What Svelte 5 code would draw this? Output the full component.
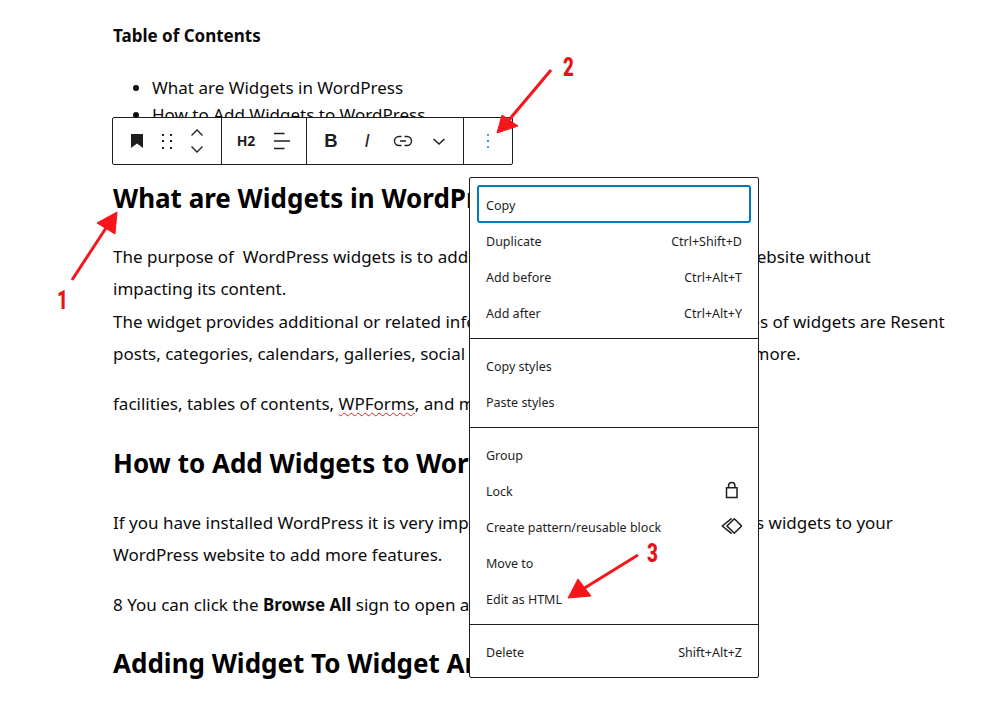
<script>
  const groups = [
    [
      { label: "Copy", focus: true },
      { label: "Duplicate", hint: "Ctrl+Shift+D" },
      { label: "Add before", hint: "Ctrl+Alt+T" },
      { label: "Add after", hint: "Ctrl+Alt+Y" }
    ],
    [{ label: "Copy styles" }, { label: "Paste styles" }],
    [
      { label: "Group" },
      { label: "Lock", icon: "lock" },
      { label: "Create pattern/reusable block", icon: "pattern" },
      { label: "Move to" },
      { label: "Edit as HTML" }
    ],
    [{ label: "Delete", hint: "Shift+Alt+Z" }]
  ];
</script>

<div class="page">
  <article class="post">
    <p class="toc-title"><strong>Table of Contents</strong></p>
    <ul>
      <li>What are Widgets in WordPress</li>
      <li>How to Add Widgets to WordPress</li>
    </ul>

    <h2 class="first">What are Widgets in WordPress</h2>
    <p>
      The purpose of&nbsp; WordPress widgets is to add extra helpful functionality to your website without<br />
      impacting its content.<br />
      The widget provides additional or related information for readers. Some examples of widgets are Resent<br />
      posts, categories, calendars, galleries, social media icons, search box, and many more.
    </p>
    <p>facilities, tables of contents, <span class="typo">WPForms</span>, and more.</p>

    <h2>How to Add Widgets to WordPress</h2>
    <p>
      If you have installed WordPress it is very important to learn how to add all various widgets to your<br />
      WordPress website to add more features.
    </p>
    <p>8 You can click the <strong>Browse All</strong> sign to open all the widgets.</p>

    <h2>Adding Widget To Widget Area</h2>
  </article>

  <div class="toolbar">
    <div class="tool-group first-group">
      <button aria-label="Table of contents">
        <svg width="24" height="24" viewBox="0 0 24 24"><path d="M6 5h12v14l-6-4.400-6 4.400z" fill="#1e1e1e" /></svg>
      </button>
      <button aria-label="Drag">
        <svg width="24" height="24" viewBox="0 0 24 24" fill="#1e1e1e">
          <path d="M7 5h2v2H7zM15 5h2v2h-2zM7 11h2v2H7zM15 11h2v2h-2zM7 18h2v2H7zM15 18h2v2h-2z" />
        </svg>
      </button>
      <div class="movers">
        <svg width="16" height="9" viewBox="0 0 16 9"><path d="M2.500 7.500 8 2l5.500 5.500" fill="none" stroke="#1e1e1e" stroke-width="1.300" /></svg>
        <svg width="16" height="9" viewBox="0 0 16 9"><path d="M2.500 1.500 8 7l5.500-5.500" fill="none" stroke="#1e1e1e" stroke-width="1.300" /></svg>
      </div>
    </div>
    <div class="tool-group wide second-group">
      <button class="h2-btn">H2</button>
      <button aria-label="Align">
        <svg width="24" height="24" viewBox="0 0 24 24" fill="#1e1e1e">
          <path d="M4 3.800h10.500v1.400H4zM4 11.300h16v1.400H4zM4 18.800h10.500v1.400H4z" />
        </svg>
      </button>
    </div>
    <div class="tool-group wide third-group">
      <button class="fmt bold">B</button>
      <button class="fmt italic">I</button>
      <button aria-label="Link">
        <svg width="24" height="24" viewBox="0 0 24 24" fill="none" stroke="#1e1e1e" stroke-width="1.400">
          <path d="M10.500 7.500H8a4.500 4.500 0 0 0 0 9h2.500M13.500 7.500H16a4.500 4.500 0 0 1 0 9h-2.500M9 12h6" />
        </svg>
      </button>
      <button aria-label="More">
        <svg width="24" height="24" viewBox="0 0 24 24"><path d="M6.500 10l5.500 5 5.500-5" fill="none" stroke="#1e1e1e" stroke-width="1.500" /></svg>
      </button>
    </div>
    <div class="tool-group last-group">
      <button aria-label="Options">
        <svg width="24" height="24" viewBox="0 0 24 24" fill="#007cba">
          <path d="M11.200 5h1.600v1.800h-1.600zM11.200 11.100h1.600v1.800h-1.600zM11.200 17.200h1.600V19h-1.600z" />
        </svg>
      </button>
    </div>
  </div>

  <div class="menu">
    {#each groups as group}
      <div class="menu-group">
        {#each group as item}
          <div class="menu-item" class:focus={item.focus}>
            <span>{item.label}</span>
            {#if item.hint}
              <span>{item.hint}</span>
            {:else if item.icon === "lock"}
              <svg width="24" height="24" viewBox="0 0 24 24" fill="none" stroke="#1e1e1e" stroke-width="1.500">
                <path d="M8.500 8.800h10.500v9.700H8.500zM10.600 8.800V6.600a3.150 3.150 0 0 1 6.300 0v2.200" />
              </svg>
            {:else if item.icon === "pattern"}
              <svg width="24" height="24" viewBox="0 0 24 24" fill="none" stroke="#1e1e1e" stroke-width="1.500">
                <path d="M16.300 3.700 23.600 11l-7.300 7.300L9 11zM13.700 3.300 4.300 11l9.400 7.700" />
              </svg>
            {/if}
          </div>
        {/each}
      </div>
    {/each}
  </div>

  <svg class="arrows" width="997" height="714" viewBox="0 0 997 714">
    <g fill="#f7151c" stroke="#f7151c">
      <path d="M72 280 106 228" stroke-width="3" />
      <path d="M117 212 97 223 115 234z" />
      <path d="M551 70 509 120" stroke-width="3" />
      <path d="M497 133 502 115 518 126z" />
      <path d="M638 555 583 589" stroke-width="3" />
      <path d="M568 598 578 579 591 596z" />
    </g>
  </svg>
  <span class="num one">1</span>
  <span class="num two">2</span>
  <span class="num three">3</span>
</div>

<style>
  :global(body) {
    background: #fff;
  }

  .page {
    position: relative;
    width: 997px;
    height: 714px;
    overflow: hidden;
    font-family: "Noto Sans", sans-serif;
    color: #0b0b0b;
  }

  .post {
    padding: 22px 0 0 113px;
    font-size: 17px;
    line-height: 32.4px;
    white-space: nowrap;
  }

  p {
    margin: 0 0 17.5px;
  }

  .toc-title {
    line-height: 27px;
    margin-bottom: 25px;
  }

  ul {
    margin: 0;
    padding-left: 39px;
    line-height: 27px;
    height: 54px;
  }

  h2 {
    font-size: 26px;
    line-height: 36px;
    font-weight: 700;
    color: #000;
    margin: 24px 0 26px;
  }

  h2.first {
    margin-top: 52px;
    margin-bottom: 25px;
  }

  .typo {
    text-decoration: underline wavy #e02020 1px;
    text-underline-offset: 2px;
  }

  .toolbar {
    position: absolute;
    left: 112px;
    top: 117px;
    display: flex;
    height: 46px;
    background: #fff;
    border: 1px solid #1e1e1e;
    border-radius: 2px;
  }

  .tool-group {
    display: flex;
    align-items: center;
    border-right: 1px solid #1e1e1e;
  }

  .first-group {
    padding: 0 9px;
  }

  .wide {
    padding: 0 6px;
  }

  .last-group {
    width: 48px;
    justify-content: center;
    border-right: 0;
  }

  .first-group button,
  .movers {
    width: 30px;
  }

  .wide button {
    width: 36px;
  }

  button {
    display: flex;
    align-items: center;
    justify-content: center;
    height: 46px;
    padding: 0;
    background: none;
    border: 0;
    color: #1e1e1e;
    font-family: inherit;
  }

  .movers {
    display: flex;
    flex-direction: column;
    align-items: center;
    gap: 8px;
  }

  .h2-btn {
    font-size: 14px;
    font-weight: 700;
    padding-bottom: 2px;
  }

  .fmt {
    font-family: "Liberation Sans", sans-serif;
    font-size: 18.500px;
  }

  .bold {
    font-weight: 700;
  }

  .italic {
    font-style: italic;
  }

  .menu {
    position: absolute;
    left: 469px;
    top: 177px;
    width: 290px;
    box-sizing: border-box;
    height: 501px;
    background: #fff;
    border: 1px solid #1e1e1e;
    border-radius: 2px;
    font-size: 12.5px;
    color: #1e1e1e;
  }

  .menu-group {
    padding: 9px 7px 7px;
    border-top: 1px solid #1e1e1e;
  }

  .menu-group:first-child {
    border-top: 0;
  }

  .menu-item {
    display: flex;
    align-items: center;
    justify-content: space-between;
    height: 36px;
    padding: 0 9px;
  }

  .menu-item.focus {
    height: 38px;
    margin-top: -2px;
    padding-top: 2px;
    box-sizing: border-box;
    border-radius: 3px;
    box-shadow: inset 0 0 0 2px #007cba;
  }

  .arrows {
    position: absolute;
    left: 0;
    top: 0;
  }

  .num {
    position: absolute;
    font-family: "Roboto", sans-serif;
    font-weight: 900;
    font-size: 25px;
    line-height: 25px;
    color: #e5141b;
    transform: scaleX(0.75);
    transform-origin: left top;
  }

  .one {
    left: 57px;
    top: 288px;
  }

  .two {
    left: 563px;
    top: 55px;
  }

  .three {
    left: 647px;
    top: 541px;
  }
</style>
